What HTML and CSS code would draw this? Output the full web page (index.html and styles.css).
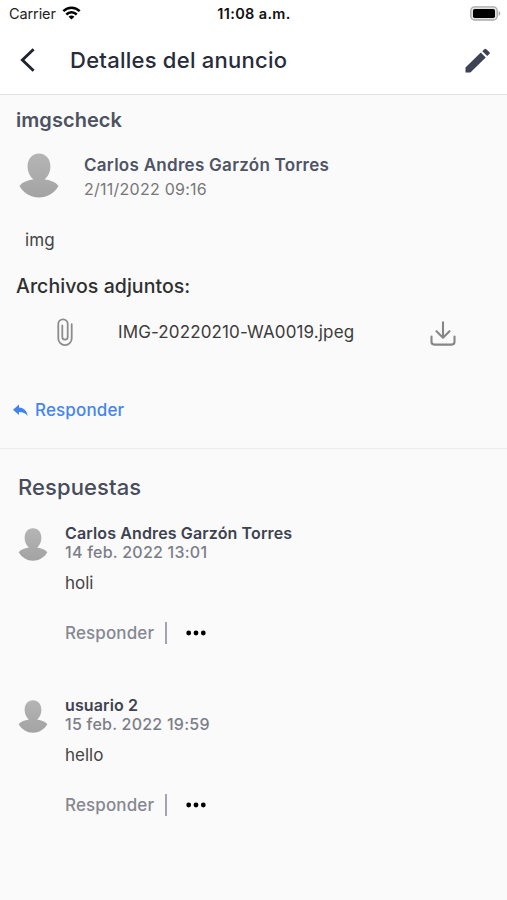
FILE: index.html
```html
<!DOCTYPE html>
<html lang="es">
<head>
<meta charset="utf-8">
<title>Detalles del anuncio</title>
<link rel="stylesheet" href="styles.css">
</head>
<body>
<svg class="defs" width="0" height="0" aria-hidden="true">
  <defs>
    <linearGradient id="shade" x1="0" y1="0" x2="0" y2="1">
      <stop offset="0" stop-color="#b5b5b5"/>
      <stop offset="1" stop-color="#a3a3a3"/>
    </linearGradient>
    <symbol id="person" viewBox="0 0 40 45">
      <path fill="url(#shade)" d="M20 .5C13 .5 8.600 6 8.600 13.500c0 5.500 2.400 10 5.800 13C8 27.300 3 29.500.500 33 5 40.500 12 44.500 20 44.500S35 40.500 39.500 33C37 29.500 32 27.300 25.600 26.500c3.400-3 5.800-7.500 5.800-13C31.400 6 27 .5 20 .5z"/>
    </symbol>
  </defs>
</svg>
<header>
  <div class="status">
    <div class="carrier"><span>Carrier</span>
      <svg width="19" height="14" viewBox="0 0 19 14"><g fill="none" stroke="#000" stroke-width="2.500"><path d="M1.300 5.200c4.700-4.600 11.700-4.600 16.400 0"/><path d="M4.300 8.500c3-2.900 7.400-2.900 10.400 0"/></g><path d="M9.500 13.600L6.600 10.700c1.700-1.500 4.100-1.500 5.800 0z"/></svg>
    </div>
    <div class="clock">11:08 a.m.</div>
    <svg class="battery" width="31" height="15" viewBox="0 0 31 15"><rect x=".8" y=".8" width="26.400" height="13.200" rx="3.800" fill="#e2e2e2" stroke="#a9a9a9" stroke-width="1.300"/><rect x="3" y="3" width="22" height="9" rx="1.800"/><path d="M28.600 5v5c2.200-1 2.200-4 0-5z" fill="#a9a9a9"/></svg>
  </div>
  <div class="bar">
    <svg class="back" width="15" height="24" viewBox="0 0 15 24"><path d="M13.600 1.200L2.400 12l11.200 10.800" fill="none" stroke="#1f2430" stroke-width="2.900"/></svg>
    <h1>Detalles del anuncio</h1>
    <svg class="pencil" width="25" height="25" viewBox="0 0 25 25" fill="#3d4255"><path d="M.5 19.500L15.800 4.600l4.900 4.800L5.400 24.500H.5z"/><path d="M17.300 3.200L19.300 1.200q1-1 2 0l3 2.900q1 1 0 2L22.200 8z"/></svg>
  </div>
</header>
<main>
  <section class="post">
    <h2>imgscheck</h2>
    <div class="author">
      <svg class="avatar" width="40" height="45"><use href="#person"/></svg>
      <div><div class="name">Carlos Andres Garzón Torres</div><div class="date">2/11/2022 09:16</div></div>
    </div>
    <p class="body">img</p>
    <h3>Archivos adjuntos:</h3>
    <div class="file">
      <svg class="clip" width="16" height="28" viewBox="0 0 16 28" fill="none" stroke="#8c8c8c" stroke-width="1.800" stroke-linecap="round"><path d="M14.700 6.200v14.200a6.700 6.700 0 0 1-13.400 0V6a4.700 4.700 0 0 1 9.400 0v13a2.700 2.700 0 0 1-5.400 0V7.500"/></svg>
      <span>IMG-20220210-WA0019.jpeg</span>
      <svg class="download" width="26" height="25" viewBox="0 0 26 25" fill="none" stroke="#868686" stroke-width="2.100" stroke-linecap="round" stroke-linejoin="round"><path d="M13 1.200v15M6.500 10.200l6.500 6.500 6.500-6.500M1.500 15.500v5.300q0 2.800 2.800 2.800h17.400q2.800 0 2.800-2.800v-5.300"/></svg>
    </div>
    <a class="reply">
      <svg width="15" height="13" viewBox="0 0 15 13" fill="#3f83f0"><path d="M0 5.700L6 .4v3.100c5 .3 8 3.200 8.700 8.600C12.800 9.200 10 8 6 8v3.100z"/></svg>
      <span>Responder</span>
    </a>
  </section>
  <section class="replies">
    <h4>Respuestas</h4>
    <article>
      <svg class="avatar" width="30" height="33"><use href="#person"/></svg>
      <div>
        <div class="name">Carlos Andres Garzón Torres</div>
        <div class="date">14 feb. 2022 13:01</div>
        <p>holi</p>
        <div class="actions"><span>Responder</span><i></i><svg width="20" height="6" viewBox="0 0 20 6"><circle cx="2.700" cy="3" r="2.400"/><circle cx="10" cy="3" r="2.400"/><circle cx="17.300" cy="3" r="2.400"/></svg></div>
      </div>
    </article>
    <article>
      <svg class="avatar" width="30" height="33"><use href="#person"/></svg>
      <div>
        <div class="name">usuario 2</div>
        <div class="date">15 feb. 2022 19:59</div>
        <p>hello</p>
        <div class="actions"><span>Responder</span><i></i><svg width="20" height="6" viewBox="0 0 20 6"><circle cx="2.700" cy="3" r="2.400"/><circle cx="10" cy="3" r="2.400"/><circle cx="17.300" cy="3" r="2.400"/></svg></div>
      </div>
    </article>
  </section>
</main>
</body>
</html>
```
FILE: styles.css
```css
* { box-sizing: border-box; margin: 0; padding: 0; }
body { height: 900px; overflow: hidden; background: #fafafa; color: #333; font-family: Inter, "Liberation Sans", sans-serif; }
svg { display: block; flex: none; }
span, h1, h2, h3, h4, .name, .date { white-space: nowrap; }
.defs { position: absolute; }
header { height: 95px; background: #fff; border-bottom: 1px solid #e2e2e4; }
.status { display: grid; grid-template-columns: 1fr auto 1fr; align-items: center; height: 26px; padding: 0 6px 0 9px; }
.carrier { display: flex; align-items: center; gap: 6px; font-size: 14.5px; letter-spacing: -.1px; color: #222; }
.clock { margin-right: 2px; font-size: 14.5px; font-weight: 600; color: #111; letter-spacing: .35px; }
.battery { justify-self: end; }
.bar { display: flex; align-items: center; height: 68px; padding: 0 17px 0 20px; }
.back { margin-right: 35px; }
h1 { flex: 1; font-size: 22px; font-weight: 500; line-height: 28px; color: #272c3b; letter-spacing: .25px; }
.post { height: 354px; border-bottom: 1px solid #ececec; }
h2 { padding: 11px 0 0 16px; font-size: 20px; font-weight: 600; line-height: 28px; color: #4d5260; letter-spacing: .05px; }
.author { display: flex; gap: 25px; padding: 18px 0 0 19px; }
.author .avatar { margin-top: 1px; }
.author .name { margin-top: 1px; font-size: 17px; font-weight: 600; line-height: 24px; color: #4f5465; letter-spacing: .28px; }
.author .date { font-size: 16px; line-height: 25px; color: #777; letter-spacing: .25px; }
.body { padding: 26px 0 0 25px; font-size: 17px; line-height: 24px; letter-spacing: .1px; color: #444; }
h3 { padding: 20px 0 0 16px; font-size: 19.5px; font-weight: 500; line-height: 28px; letter-spacing: .05px; color: #2f2f2f; }
.file { display: flex; align-items: center; height: 64px; padding: 0 51px 0 57px; font-size: 17px; letter-spacing: .13px; color: #3c3c3c; }
.file span { flex: 1; margin-left: 45px; }
.download { margin-top: 2px; }
.clip { margin-top: -1px; }
.reply { display: flex; align-items: center; gap: 7px; height: 24px; margin: 34px 0 0 13px; font-size: 17px; font-weight: 500; letter-spacing: .15px; color: #4585ef; }
.replies { padding-top: 24px; }
h4 { padding-left: 18px; font-size: 22px; font-weight: 500; line-height: 28px; letter-spacing: .1px; color: #484c5a; }
article { display: flex; gap: 17px; height: 172px; padding-left: 18px; }
h4 + article { margin-top: 22px; }
article .avatar { margin-top: 5px; }
article .name { font-size: 16px; font-weight: 600; line-height: 20px; letter-spacing: .13px; color: #3d4250; }
article .date { font-size: 16px; font-weight: 500; line-height: 18px; letter-spacing: .24px; color: #7b7e88; }
article p { margin-top: 10px; font-size: 17px; line-height: 24px; color: #444; }
.actions { display: flex; align-items: center; height: 24px; margin-top: 26px; font-size: 17px; font-weight: 500; letter-spacing: .13px; color: #858892; }
.actions i { width: 2px; height: 22px; margin: 0 19px 0 11px; background: #a2a4b0; }
```
